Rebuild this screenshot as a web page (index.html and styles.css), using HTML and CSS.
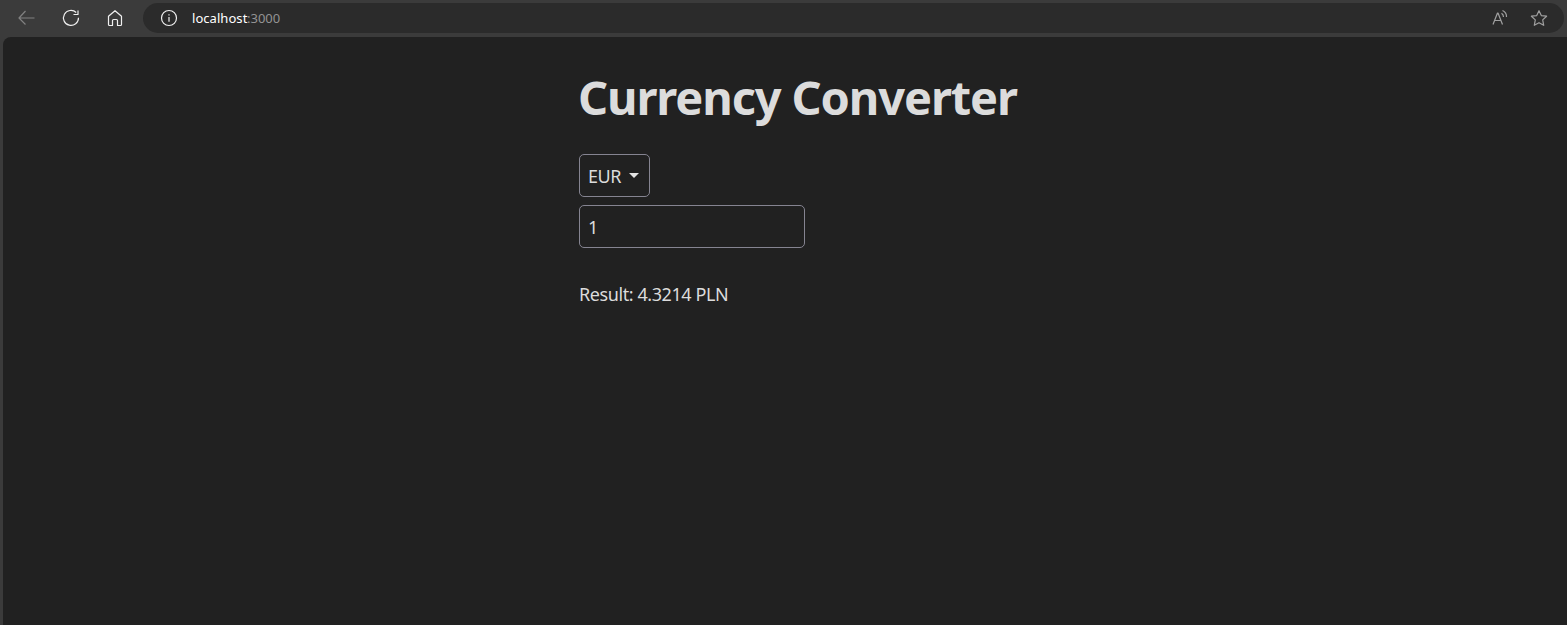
FILE: index.html
```
<!DOCTYPE html>
<html lang="en">
<head>
<meta charset="utf-8">
<title>Currency Converter</title>
<link rel="stylesheet" href="styles.css">
</head>
<body>
<header class="toolbar">
  <nav class="nav">
    <svg class="icon dim" viewBox="0 0 20 20"><path d="M17.500 10H2M8.500 3L2 10L8.500 16.500"/></svg>
    <svg class="icon" viewBox="0 0 20 20"><path d="M15.200 4.500A7.500 7.500 0 1 0 17.500 9.800M17 2.500V6.500H12.500"/></svg>
    <svg class="icon" viewBox="0 0 20 20"><path d="M3.500 8.300L10 2.700L16.500 8.300V16.500Q16.500 17.500 15.500 17.500H12.500V12.500Q12.500 11.500 11.500 11.500H8.500Q7.500 11.500 7.500 12.500V17.500H4.500Q3.500 17.500 3.500 16.500Z"/></svg>
  </nav>
  <div class="address">
    <svg class="icon" viewBox="0 0 20 20"><circle cx="10" cy="10" r="7.500"/><path d="M10 9V13.800M10 6.200V7.500"/></svg>
    <span class="url"><span class="host">localhost</span><span class="port">:3000</span></span>
    <svg class="icon muted read" viewBox="0 0 20 20"><path d="M3 16.500L7.500 5H8L12.500 16.500M4.500 12.500H11M11.500 5.200Q13.500 6.500 13.500 9M12.500 2.500Q16.700 4.500 16.500 9"/></svg>
    <svg class="icon muted" viewBox="0 0 20 20"><path d="M10 2.700L12.300 7.600L17.600 8.200L13.700 11.900L14.700 17.300L10 14.700L5.300 17.300L6.300 11.900L2.400 8.200L7.700 7.600Z"/></svg>
  </div>
</header>
<main class="page">
  <div class="converter">
    <h1 class="title">Currency Converter</h1>
    <button class="field select" type="button"><span>EUR</span><svg class="caret" viewBox="0 0 10 5"><path d="M0 0H10L5 5Z"/></svg></button>
    <input class="field amount" type="text" value="1" aria-label="Amount">
    <p class="result">Result: 4.3214 PLN</p>
  </div>
</main>
</body>
</html>
```
FILE: styles.css
```
* { box-sizing: border-box; }
body {
  margin: 0;
  height: 625px;
  display: flex;
  flex-direction: column;
  overflow: hidden;
  background: #3b3b3b;
  font-family: "Noto Sans", "Open Sans", sans-serif;
}
.toolbar {
  height: 37px;
  flex: none;
  display: flex;
  padding: 3px 3px 4px 17px;
}
.nav {
  width: 126px;
  display: flex;
  align-items: center;
  gap: 24px;
}
.icon {
  width: 20px;
  height: 20px;
  flex: none;
  fill: none;
  stroke: #f0f0f0;
  stroke-width: 1.2;
  stroke-linejoin: round;
}
.dim { stroke: #818181; }
.muted { stroke: #a0a0a0; }
.address {
  flex: 1;
  display: flex;
  align-items: center;
  padding: 0 15px 0 16px;
  border-radius: 15px;
  background: #2b2b2b;
}
.url {
  display: flex;
  margin-left: 13px;
  font-size: 13px;
  line-height: 18px;
}
.host { width: 55px; color: #fff; letter-spacing: 0.05px; }
.port { color: #939393; letter-spacing: 0; }
.read { margin-left: auto; margin-right: 19px; }
.page {
  flex: 1;
  margin-left: 3px;
  border-top-left-radius: 8px;
  background: #212121;
  color: #dcdcdc;
}
.converter {
  width: 460px;
  margin-left: 576px;
  padding-top: 28px;
  display: flex;
  flex-direction: column;
  align-items: flex-start;
}
.title {
  margin: 0 0 25px -1px;
  font-size: 47px;
  line-height: 64px;
  font-weight: 700;
  white-space: nowrap;
  letter-spacing: -1.13px;
}
.field {
  height: 43px;
  border: 1px solid #858491;
  border-radius: 5px;
  background: transparent;
  color: inherit;
  font-family: inherit;
  font-size: 18px;
  padding: 0 8px;
}
.select {
  width: 71px;
  display: flex;
  align-items: center;
  justify-content: space-between;
  margin-bottom: 8px;
  padding-right: 10px;
  letter-spacing: -0.4px;
}
.caret { width: 10px; height: 5px; fill: #e4e4e4; }
.amount { width: 226px; }
.result {
  margin: 33px 0 0;
  font-size: 18px;
  line-height: 27px;
  letter-spacing: -0.42px;
}
```
